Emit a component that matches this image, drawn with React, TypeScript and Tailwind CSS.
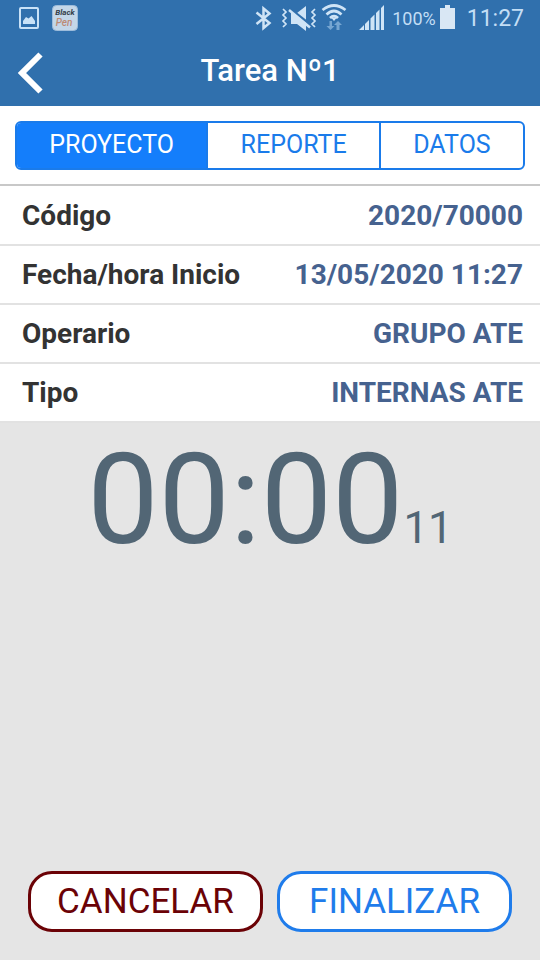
import React from "react";

const tabs = ["PROYECTO", "REPORTE", "DATOS"];

const details = [
  { label: "Código", value: "2020/70000" },
  { label: "Fecha/hora Inicio", value: "13/05/2020 11:27" },
  { label: "Operario", value: "GRUPO ATE" },
  { label: "Tipo", value: "INTERNAS ATE" },
];

function PictureIcon() {
  return (
    <svg width="20" height="22" viewBox="0 0 20 22" aria-hidden="true">
      <rect x="1" y="1" width="18" height="20" rx="1" fill="none" stroke="#c9e2f7" strokeWidth="2" />
      <path d="M4 17v-3l3-4 2.500 1.500L12.500 9l1.500 2 2 3v3z" fill="#c9e2f7" />
    </svg>
  );
}

function BlackPenIcon() {
  return (
    <svg width="26" height="26" viewBox="0 0 26 26" aria-hidden="true" className="font-[Roboto,sans-serif]">
      <rect x="0.5" y="0.5" width="25" height="25" rx="4" fill="#c3d6e8" stroke="#9dbcdb" />
      <text x="13" y="10" fontSize="8" fontWeight="700" fontStyle="italic" textAnchor="middle" fill="#333d49">Black</text>
      <text x="12" y="21" fontSize="10" fontWeight="500" fontStyle="italic" textAnchor="middle" fill="#bd8a75">Pen</text>
    </svg>
  );
}

function BluetoothIcon() {
  return (
    <svg width="18" height="26" viewBox="0 0 18 26" fill="none" stroke="#cfe4f6" strokeWidth="2.5" aria-hidden="true">
      <path d="M1.500 7.500 14.500 18 8.500 23V3.500L14.500 8.500 1.500 19" />
    </svg>
  );
}

function MutedIcon() {
  return (
    <svg width="36" height="28" viewBox="0 0 36 28" fill="none" aria-hidden="true">
      <path d="M10 9h6l9-7v25l-9-7h-6z" fill="#cfe4f6" />
      <path d="M7 3 31 22" stroke="#3070ad" strokeWidth="2.500" />
      <path d="M8 6 29 23.500" stroke="#cfe4f6" strokeWidth="2.500" />
      <path d="M2 5l3 3-3 3 3 3-3 3 3 3-3 3M34 5l-3 3 3 3-3 3 3 3-3 3 3 3" stroke="#cfe4f6" strokeWidth="1.700" />
    </svg>
  );
}

function WifiIcon() {
  return (
    <svg width="26" height="28" viewBox="0 0 26 28" fill="none" aria-hidden="true">
      <path d="M1.500 6Q13-3 24.500 6M5.500 10.500Q13 3.500 20.500 10.500M9 14Q13 10 17 14" stroke="#cfe4f6" strokeWidth="2.700" />
      <path d="M10 13.500h6L13 17z" fill="#cfe4f6" />
      <path d="M8.500 17h2.500v5h2.500l-4 4-4-4h3zM15.500 26v-5H13l4-4 4 4h-2.500v5z" fill="#76a6d2" />
    </svg>
  );
}

function SignalIcon() {
  return (
    <svg width="26" height="26" viewBox="0 0 26 26" fill="#cfe4f6" aria-hidden="true">
      <path d="M0 25l5-5v5zM6 19l4-4v10H6zM11.500 13.500l4-4V25h-4zM17 8l3.500-3.500V25H17zM22 3l3-3v25h-3z" />
    </svg>
  );
}

function BatteryIcon() {
  return (
    <svg width="15" height="26" viewBox="0 0 15 26" fill="#d9e7f4" aria-hidden="true">
      <path d="M5 0h5v3h5v21H0V3h5z" />
    </svg>
  );
}

function StatusBar() {
  return (
    <div className="flex h-9 items-center justify-between pr-4 pl-[19px] text-[#c3def5]">
      <div className="flex items-center gap-[13px]">
        <PictureIcon />
        <BlackPenIcon />
      </div>
      <div className="flex items-center gap-3">
        <div className="flex items-center gap-1">
          <div className="flex items-center gap-2">
            <BluetoothIcon />
            <MutedIcon />
          </div>
          <WifiIcon />
        </div>
        <div className="flex items-center gap-[7px]">
          <SignalIcon />
          <div className="flex items-center gap-1">
            <span className="pt-0.5 text-lg leading-6">100%</span>
            <BatteryIcon />
          </div>
        </div>
        <time className="pt-0.5 text-[23px] leading-6">11:27</time>
      </div>
    </div>
  );
}

export default function App() {
  return (
    <div className="flex min-h-screen flex-col bg-[#e5e5e5] font-[Roboto,sans-serif]">
      <header className="bg-[#3070ad]">
        <StatusBar />
        <div className="grid h-[70px] grid-cols-[64px_1fr_64px] items-center">
          <button type="button" aria-label="Volver" className="pt-1 pl-[17px]">
            <svg width="28" height="42" viewBox="0 0 28 42" fill="none" aria-hidden="true">
              <path d="M23.500 2.500 5 21l18.500 18.500" stroke="#fff" strokeWidth="6" />
            </svg>
          </button>
          <h1 className="text-center text-[31px] leading-9 font-medium text-white">Tarea Nº1</h1>
        </div>
      </header>

      <nav className="border-b-2 border-[#c8c8c8] bg-white px-[15px] pt-[15px] pb-[14px]">
        <div className="flex h-[49px] divide-x-2 divide-[#1a7bea] overflow-hidden rounded-md border-2 border-[#1a7bea]">
          {tabs.map((tab, i) => (
            <button
              key={tab}
              type="button"
              aria-pressed={i === 0}
              className={
                i === 0
                  ? "flex-auto bg-[#147efb] pb-0.5 text-[25px] leading-8 text-white"
                  : "flex-auto pb-0.5 text-[25px] leading-8 text-[#1a7bea]"
              }
            >
              {tab}
            </button>
          ))}
        </div>
      </nav>

      <dl className="bg-white pt-px text-[28px] leading-8 font-bold">
        {details.map((d) => (
          <div
            key={d.label}
            className="flex h-[59px] items-center justify-between border-b-2 border-[#e2e2e2] pr-[17px] pl-[22px]"
          >
            <dt className="text-[#333333]">{d.label}</dt>
            <dd className="text-[#46628f]">{d.value}</dd>
          </div>
        ))}
      </dl>

      <main className="flex flex-1 flex-col justify-between">
        <div className="flex items-baseline justify-center text-[#526675]" role="timer">
          <span className="text-[127px] leading-[154px]">00:00</span>
          <span className="text-[44px]">11</span>
        </div>
        <div className="flex gap-[14px] px-7 pb-7">
          <button
            type="button"
            className="h-[61px] flex-1 rounded-3xl border-3 border-[#6b0206] bg-white text-[35px] leading-10 text-[#6b0206]"
          >
            CANCELAR
          </button>
          <button
            type="button"
            className="h-[61px] flex-1 rounded-3xl border-3 border-[#1f7ceb] bg-white text-[35px] leading-10 text-[#1f7ceb]"
          >
            FINALIZAR
          </button>
        </div>
      </main>
    </div>
  );
}
